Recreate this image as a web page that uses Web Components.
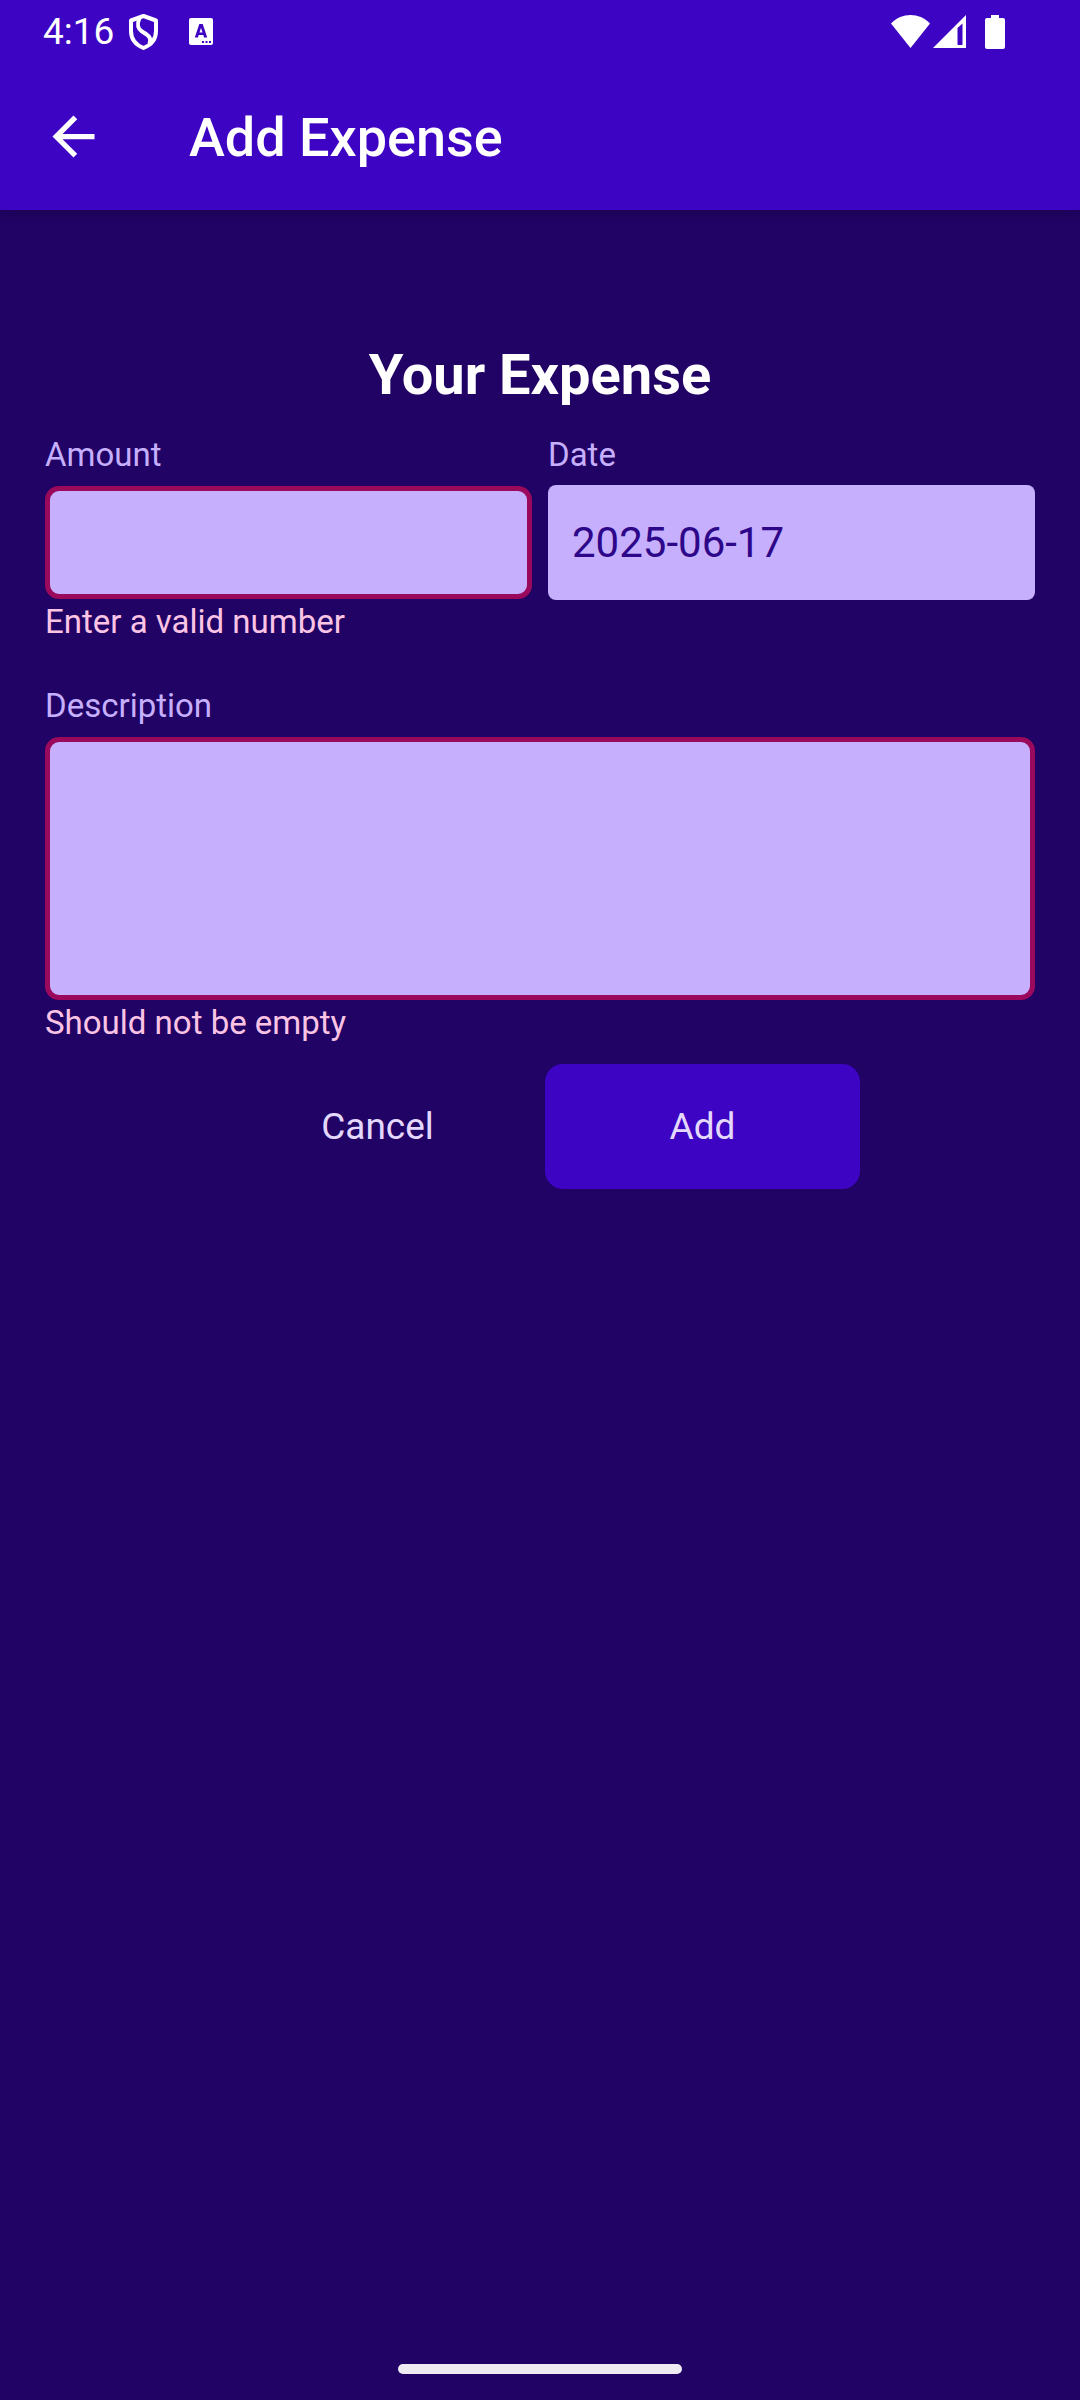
<!DOCTYPE html>
<html lang="en">
<head>
<meta charset="utf-8">
<meta name="viewport" content="width=device-width, initial-scale=1">
<title>Add Expense</title>
<style>
  :root {
    --primary50: #e4d9fd;
    --primary100: #c6affc;
    --primary500: #3e04c3;
    --primary700: #2d0689;
    --primary800: #200364;
    --error50: #fcc4e4;
    --error500: #9b095c;
  }
  body { margin: 0; background: var(--primary800); font-family: Roboto, sans-serif; }
</style>
</head>
<body>
<expense-screen></expense-screen>
<script>
const define = (name, html, setup) => {
  const template = document.createElement('template');
  template.innerHTML = html;
  customElements.define(name, class extends HTMLElement {
    constructor() {
      super();
      this.attachShadow({ mode: 'open' }).append(template.content.cloneNode(true));
    }
    connectedCallback() {
      if (setup) setup(this, this.shadowRoot);
    }
  });
};

define('status-bar', `
  <style>
    :host { display: flex; justify-content: space-between; align-items: center; height: 63px; padding: 0 75px 0 43px; color: #fff; font-size: 37px; box-sizing: border-box; }
    div { display: flex; align-items: center; }
    svg { display: block; fill: currentColor; }
    .left svg:first-of-type { margin: 0 30px 0 14px; }
    .right svg + svg { margin-left: 3px; }
    .right svg:last-child { margin-left: 19px; }
  </style>
  <div class="left">
    <span>4:16</span>
    <svg width="31" height="36" viewBox="0 0 31 36" aria-hidden="true" style="fill:none;stroke:#fff;stroke-width:4;stroke-linejoin:round"><path d="M15.500 2 28 6.500V17C28 25 23 31 15.500 34 8 31 3 25 3 17V6.500Z"/><path d="M11.500 4C9 10 9 14 14 17.500 20 21 24 23.500 21.500 29.500"/></svg>
    <svg width="24" height="27" viewBox="0 0 24 27" aria-hidden="true"><path fill-rule="evenodd" d="M2 0H22Q24 0 24 2V25Q24 27 22 27H2Q0 27 0 25V2Q0 0 2 0ZM10.300 6 5.800 19.500H8.900L9.700 17H14.300L15.100 19.500H18.200L13.700 6ZM10.500 14.500 12 9.700 13.500 14.500ZM13 23V25H15V23ZM16.500 23V25H18.500V23ZM20 23V25H22V23Z"/></svg>
  </div>
  <div class="right">
    <svg width="39" height="33" viewBox="0 0 39 33" aria-hidden="true"><path d="M0 8.500C11-2.800 28-2.800 39 8.500L19.500 33Z"/></svg>
    <svg width="33" height="33" viewBox="0 0 33 33" aria-hidden="true"><path fill-rule="evenodd" d="M33 0V33H0ZM24.500 13V30H29.500V8.500Z"/></svg>
    <svg width="20" height="34" viewBox="0 0 20 34" aria-hidden="true"><path d="M6 0H14V3H18Q20 3 20 5V32Q20 34 18 34H2Q0 34 0 32V5Q0 3 2 3H6Z"/></svg>
  </div>`);

define('app-bar', `
  <style>
    :host { display: flex; align-items: center; height: 147px; padding: 0 42px; gap: 84px; color: #fff; box-sizing: border-box; }
    button { display: block; padding: 0; border: 0; background: none; color: inherit; }
    svg { display: block; fill: currentColor; }
    h1 { margin: 0; padding-top: 3px; font-size: 54px; font-weight: 500; line-height: 62px; }
  </style>
  <button type="button" aria-label="Back"><svg width="63" height="63" viewBox="0 0 24 24"><path d="M20 11H7.830l5.590-5.590L12 4l-8 8 8 8 1.410-1.410L7.830 13H20v-2z"/></svg></button>
  <h1><slot></slot></h1>`);

define('form-field', `
  <style>
    :host { display: flex; flex-direction: column; min-width: 0; }
    label, p { margin: 0; font-size: 33px; line-height: 40px; }
    label { color: var(--primary100); margin-bottom: 10px; }
    p { color: var(--error50); margin-top: 2px; }
    input, textarea { display: block; width: 100%; height: 115px; margin: 0; padding: 0 24px; box-sizing: border-box; border: 0; border-radius: 8px; outline: 0; resize: none; background: var(--primary100); color: var(--primary700); font: 42px Roboto, sans-serif; }
    :host([error]) input, :host([error]) textarea { height: 113px; margin: 1px 0; border: 5px solid var(--error500); border-radius: 14px; }
    :host([error]) textarea { height: 263px; padding: 16px; }
  </style>
  <label for="control"></label>`, (host, root) => {
    root.querySelector('label').textContent = host.getAttribute('label');
    const control = document.createElement(host.hasAttribute('multiline') ? 'textarea' : 'input');
    control.id = 'control';
    control.value = host.getAttribute('value') || '';
    root.append(control);
    if (host.hasAttribute('error')) {
      const message = document.createElement('p');
      message.id = 'message';
      message.textContent = host.getAttribute('error');
      control.setAttribute('aria-invalid', 'true');
      control.setAttribute('aria-describedby', 'message');
      root.append(message);
    }
  });

define('action-button', `
  <style>
    :host { display: block; width: 315px; }
    button { width: 100%; height: 125px; padding: 0; border: 0; border-radius: 18px; background: none; color: var(--primary50); font: 37px Roboto, sans-serif; }
    :host([filled]) button { background: var(--primary500); }
  </style>
  <button type="button"><slot></slot></button>`);

define('expense-form', `
  <style>
    :host { display: block; padding: 132px 45px 0; }
    h2 { margin: 0 0 27px; color: #fff; text-align: center; font-size: 56px; font-weight: 700; line-height: 66px; }
    .row { display: grid; grid-template-columns: 1fr 1fr; gap: 16px; margin-bottom: 44px; align-items: start; }
    .actions { display: flex; justify-content: center; gap: 10px; margin-top: 21px; }
  </style>
  <h2>Your Expense</h2>
  <div class="row">
    <form-field label="Amount" error="Enter a valid number"></form-field>
    <form-field label="Date" value="2025-06-17"></form-field>
  </div>
  <form-field label="Description" multiline error="Should not be empty"></form-field>
  <div class="actions">
    <action-button>Cancel</action-button>
    <action-button filled>Add</action-button>
  </div>`);

define('expense-screen', `
  <style>
    :host { display: flex; flex-direction: column; min-height: 100vh; background: var(--primary800); }
    header { background: var(--primary500); box-shadow: 0 2px 12px rgba(0, 0, 0, .2); }
    main { flex: 1; }
    footer { display: flex; justify-content: center; padding: 20px 0 26px; }
    .handle { width: 284px; height: 10px; border-radius: 5px; background: #efebf3; }
  </style>
  <header><status-bar></status-bar><app-bar>Add Expense</app-bar></header>
  <main><expense-form></expense-form></main>
  <footer><div class="handle"></div></footer>`);
</script>
</body>
</html>
